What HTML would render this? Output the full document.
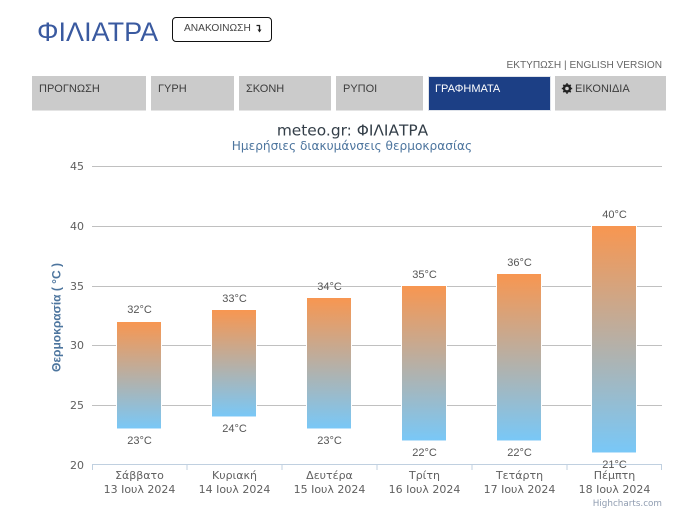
<!DOCTYPE html>
<html lang="el">
<head>
<meta charset="utf-8">
<style>
html,body{margin:0;padding:0;background:#fff;}
body{width:679px;height:526px;position:relative;overflow:hidden;font-family:"Liberation Sans",sans-serif;}
.abs{position:absolute;white-space:nowrap;}
.tab{position:absolute;top:76px;height:34px;background:#cbcbcb;border-bottom:1px solid #e4e4e4;color:#3c3c3c;font-size:11px;line-height:26px;padding-left:7px;box-sizing:content-box;}
svg{position:absolute;left:0;top:0;}
</style>
</head>
<body>
<div class="abs" style="left:37px;top:15px;font-size:27px;line-height:34px;color:#3a5aa0;">ΦΙΛΙΑΤΡΑ</div>
<div class="abs" style="left:172px;top:17px;width:98px;height:23px;border:1px solid #111;border-radius:4px;font-size:10.2px;line-height:22px;color:#444;background:#fff;text-indent:11px;">ΑΝΑΚΟΙΝΩΣΗ</div>
<svg width="679" height="526" style="z-index:2;pointer-events:none">
<path d="M256.500 25.500h3v5" fill="none" stroke="#222" stroke-width="1.300"/>
<path d="M257.500 29.500h4l-2 3z" fill="#222"/>
</svg>
<div class="abs" style="right:17px;top:59px;font-size:10.100px;line-height:13px;color:#666;">ΕΚΤΥΠΩΣΗ | ENGLISH VERSION</div>

<div class="tab" style="left:32px;width:107px;">ΠΡΟΓΝΩΣΗ</div>
<div class="tab" style="left:151px;width:76px;">ΓΥΡΗ</div>
<div class="tab" style="left:239px;width:85px;">ΣΚΟΝΗ</div>
<div class="tab" style="left:336px;width:80px;">ΡΥΠΟΙ</div>
<div class="tab" style="left:428px;width:115px;background:#1c3f85;color:#fff;border:1px solid #dfe3ea;top:76px;height:33px;padding-left:6px;line-height:24px;">ΓΡΑΦΗΜΑΤΑ</div>
<div class="tab" style="left:555px;width:91px;padding-left:20px;">ΕΙΚΟΝΙΔΙΑ</div>

<svg width="679" height="526" viewBox="0 0 679 526" font-family="'DejaVu Sans',sans-serif">
<defs>
<linearGradient id="g" x1="0" y1="0" x2="0" y2="1">
<stop offset="0" stop-color="#f89650"/>
<stop offset="1" stop-color="#78c8f8"/>
</linearGradient>
</defs>
<!-- gear -->
<circle cx="567" cy="88.500" r="3" fill="none" stroke="#222" stroke-width="2.400"/>
<path d="M567 83.300v2M567 91.700v2M561.800 88.500h2M570.200 88.500h2M563.300 84.800l1.400 1.400M569.300 90.800l1.400 1.400M570.700 84.800l-1.400 1.400M564.700 90.800l-1.400 1.400" stroke="#222" stroke-width="1.600"/>

<text x="352.500" y="135.500" text-anchor="middle" font-size="15.400" fill="#333e48">meteo.gr: ΦΙΛΙΑΤΡΑ</text>
<text x="352" y="150" text-anchor="middle" font-size="12.150" fill="#4d759e">Ημερήσιες διακυμάνσεις θερμοκρασίας</text>

<g stroke="#c0c0c0" stroke-width="1">
<line x1="92" x2="662" y1="166.500" y2="166.500"/>
<line x1="92" x2="662" y1="226.500" y2="226.500"/>
<line x1="92" x2="662" y1="286.500" y2="286.500"/>
<line x1="92" x2="662" y1="345.500" y2="345.500"/>
<line x1="92" x2="662" y1="405.500" y2="405.500"/>
</g>
<g stroke="#c0d0e0" stroke-width="1" fill="none">
<line x1="92" x2="662" y1="464.500" y2="464.500"/>
<path d="M92.500 465v5M187 465v5M282 465v5M377 465v5M472 465v5M567 465v5M661.500 465v5"/>
</g>

<g font-size="11" fill="#606060" text-anchor="end">
<text x="84" y="170">45</text>
<text x="84" y="230">40</text>
<text x="84" y="290">35</text>
<text x="84" y="349">30</text>
<text x="84" y="409">25</text>
<text x="84" y="469">20</text>
</g>

<text transform="translate(60.500 317.500) rotate(-90)" text-anchor="middle" font-family="'Liberation Sans',sans-serif" font-size="12" font-weight="bold" textLength="109" fill="#4d759e">Θερμοκρασία ( °C )</text>

<g stroke="#fff" stroke-width="1">
<rect x="116.500" y="321.500" width="45" height="108" fill="url(#g)"/>
<rect x="211.500" y="309.500" width="45" height="108" fill="url(#g)"/>
<rect x="306.500" y="297.500" width="45" height="132" fill="url(#g)"/>
<rect x="401.500" y="285.500" width="45" height="156" fill="url(#g)"/>
<rect x="496.500" y="273.500" width="45" height="168" fill="url(#g)"/>
<rect x="591.500" y="225.500" width="45" height="228" fill="url(#g)"/>
</g>
<g fill="#bfe3fa">
<rect x="117" y="428" width="44" height="1"/>
<rect x="212" y="416" width="44" height="1"/>
<rect x="307" y="428" width="44" height="1"/>
<rect x="402" y="440" width="44" height="1"/>
<rect x="497" y="440" width="44" height="1"/>
<rect x="592" y="452" width="44" height="1"/>
</g>

<g font-size="11" fill="#555" text-anchor="middle" font-family="'Liberation Sans',sans-serif">
<text x="139.500" y="313">32°C</text>
<text x="234.500" y="302">33°C</text>
<text x="329.500" y="290">34°C</text>
<text x="424.500" y="278">35°C</text>
<text x="519.500" y="266">36°C</text>
<text x="614.500" y="218">40°C</text>
<text x="139.500" y="444">23°C</text>
<text x="234.500" y="432">24°C</text>
<text x="329.500" y="444">23°C</text>
<text x="424.500" y="456">22°C</text>
<text x="519.500" y="456">22°C</text>
<text x="614.500" y="468">21°C</text>
</g>

<g font-size="11" fill="#606060" text-anchor="middle">
<text x="139.500" y="479">Σάββατο</text>
<text x="139.500" y="493">13 Ιουλ 2024</text>
<text x="234.500" y="479">Κυριακή</text>
<text x="234.500" y="493">14 Ιουλ 2024</text>
<text x="329.500" y="479">Δευτέρα</text>
<text x="329.500" y="493">15 Ιουλ 2024</text>
<text x="424.500" y="479">Τρίτη</text>
<text x="424.500" y="493">16 Ιουλ 2024</text>
<text x="519.500" y="479">Τετάρτη</text>
<text x="519.500" y="493">17 Ιουλ 2024</text>
<text x="614.500" y="479">Πέμπτη</text>
<text x="614.500" y="493">18 Ιουλ 2024</text>
</g>
<text x="662" y="506" text-anchor="end" font-size="8.800" fill="#8f9cb0">Highcharts.com</text>
</svg>
</body>
</html>
